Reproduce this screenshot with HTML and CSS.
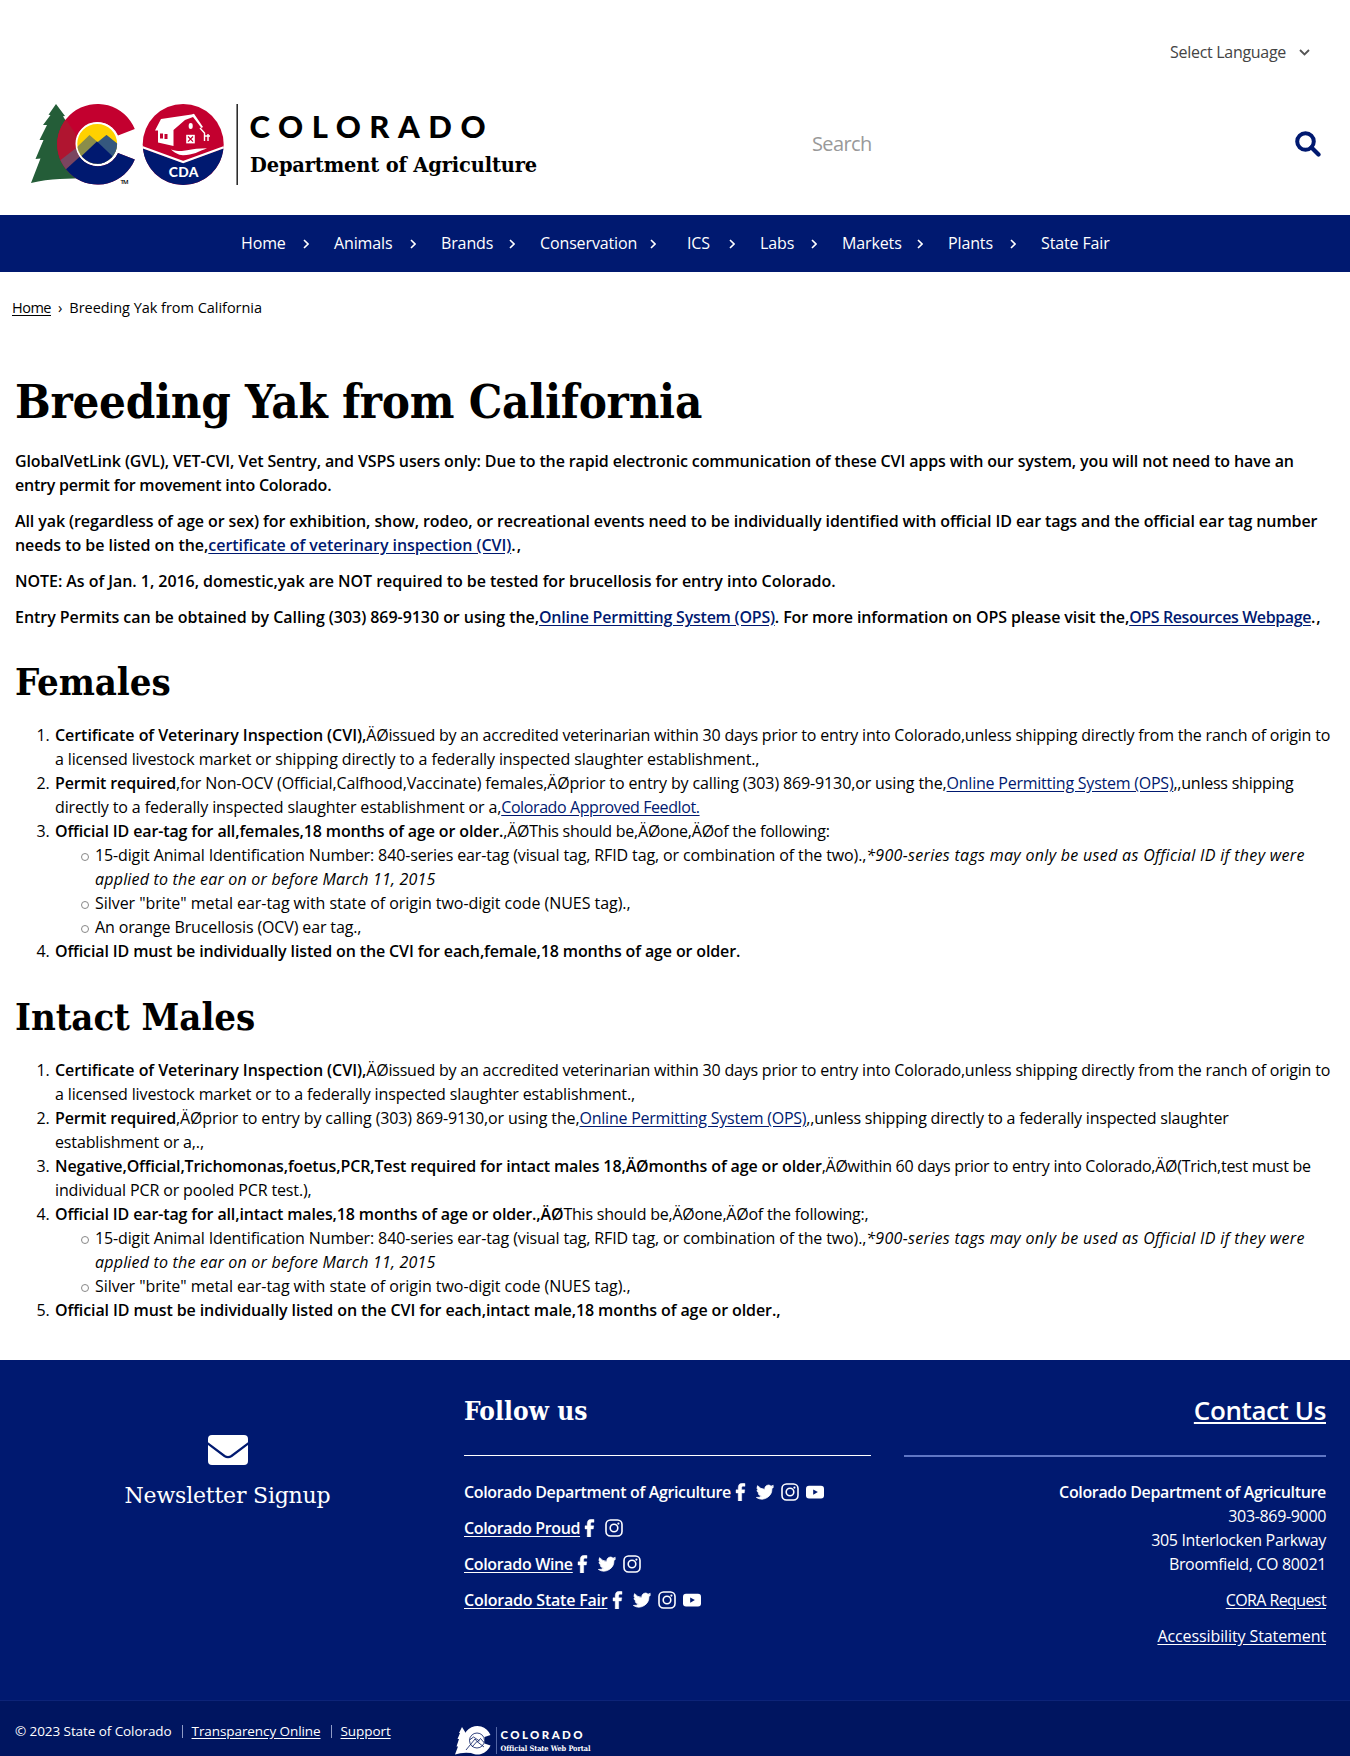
FILE: index.html
```html
<!DOCTYPE html>
<html lang="en">
<head>
<meta charset="utf-8">
<title>Breeding Yak from California | Department of Agriculture</title>
<link rel="stylesheet" href="styles.css">
</head>
<body>
<svg class="defs" width="0" height="0" aria-hidden="true">
  <symbol id="i-facebook" viewBox="0 0 12 18"><path d="M3.200 18V10H1V6.800h2.200V4.600C3.200 1.700 4.800.2 7.400.2c1 0 2 .1 2.600.2v2.900H8.300C7 3.300 6.700 4 6.700 4.900v1.900h3.100L9.300 10H6.700v8z" fill="currentColor" stroke="currentColor" stroke-width=".4"/></symbol>
  <symbol id="i-twitter" viewBox="0 0 24 24"><path d="M23.600 4.900c-.85.4-1.800.6-2.700.75 1-.6 1.700-1.500 2.100-2.600-.9.550-1.900.95-3 1.150A4.750 4.750 0 0 0 11.900 8.500 13.500 13.500 0 0 1 2.100 3.550a4.750 4.750 0 0 0 1.450 6.350c-.8 0-1.500-.25-2.150-.6v.05c0 2.300 1.650 4.200 3.800 4.650-.7.200-1.400.2-2.150.1.600 1.850 2.350 3.200 4.450 3.250A9.600 9.600 0 0 1 .5 19.300a13.450 13.450 0 0 0 20.700-11.950c1-.65 1.800-1.500 2.400-2.450z" fill="currentColor" stroke="currentColor"/></symbol>
  <symbol id="i-instagram" viewBox="0 0 18 18"><rect x="1" y="1" width="16" height="16" rx="4.500" fill="none" stroke="currentColor" stroke-width="1.600"/><circle cx="9" cy="9" r="3.800" fill="none" stroke="currentColor" stroke-width="1.600"/><circle cx="13.400" cy="4.600" r="1.100" fill="currentColor"/></symbol>
  <symbol id="i-youtube" viewBox="0 0 18 18"><rect x="0" y="2.800" width="18" height="12.600" rx="3" fill="currentColor"/><path d="M7.200 6.400v5.400l4.700-2.700z" fill="#001970"/></symbol>
  <symbol id="i-chevron" viewBox="0 0 6 10"><path d="M1 1l4 4-4 4" fill="none" stroke="currentColor" stroke-width="1.600"/></symbol>
</svg>

<header class="header">
  <div class="language"><span>Select Language</span>
    <svg width="11" height="7" viewBox="0 0 11 7"><path d="M1 1l4.500 4.500L10 1" fill="none" stroke="#555" stroke-width="1.800"/></svg>
  </div>
  <div class="brand-row">
    <svg class="logo" width="510" height="84" viewBox="29 103 510 84" role="img" aria-label="Colorado Department of Agriculture">
      <path d="M56 104l9 12-2 .3 8 13-3 .2 8 18-4 .5 14 30c-16 1-36 0-55 5l9.500-24.500-5 .5 8-19h-4l7.500-15h-4l7.500-10-2-.2z" fill="#245d38"/>
      <clipPath id="c-shape"><path d="M134.800 129L118 135.500A22 22 0 1 0 118 153L134.800 159.500A40.300 40.300 0 1 1 134.800 129z"/></clipPath>
      <g clip-path="url(#c-shape)">
        <rect x="55" y="100" width="85" height="90" fill="#c3002f"/>
        <path d="M56 124l7-9 12 18 4 22-24 10z" fill="#b01530"/>
        <path d="M58 162l22-17 12 16-24 19z" fill="#7a4560"/>
        <path d="M63 172l34-31 44 16v33H63z" fill="#001970"/>
      </g>
      <circle cx="97.200" cy="143.800" r="20.800" fill="#ffd100" stroke="#fff" stroke-width="1.800"/>
      <clipPath id="sun"><circle cx="97.200" cy="143.800" r="19.900"/></clipPath>
      <g clip-path="url(#sun)">
        <path d="M74 150l15.500-15 8 7 9-7 16 13v20H74z" fill="#8a8d4a"/>
        <path d="M97 143l9.500-8 16 13v20H97z" fill="#35587e"/>
        <path d="M74 163l23-21.500 20 19 4 8H74z" fill="#001970"/>
      </g>
      <text x="120.500" y="183.500" font-family="Open Sans" font-weight="600" font-size="6" textLength="8">TM</text>
      <circle cx="183.200" cy="144.500" r="40.500" fill="#c3002f"/>
      <path d="M142.900 148.500l40.300 14.500 40.300-14.500A40.500 40.500 0 0 1 142.900 148.500z" fill="#001970"/>
      <path d="M142.700 147.200l40.500 14.800 40.500-14.800" fill="none" stroke="#fff" stroke-width="2.200"/>
      <path d="M155 130.500l6-11.500 30.500-4.500 2.500-.8 9 13.300-1.500 1-8.500-11-8 3-11.500 10v16l-15.500-3.500v-12z" fill="#fff"/>
      <path d="M160 133.500h3v5h-3zM164.500 134h3v5h-3z" fill="#c3002f"/>
      <rect x="186.200" y="134.800" width="8.600" height="8.600" fill="#fff"/>
      <path d="M188 136.500l5 5.200m0-5.200l-5 5.200" stroke="#c3002f" stroke-width="1.200"/>
      <rect x="188.700" y="123" width="4" height="6" rx="2" fill="#fff"/>
      <path d="M200 128l4.500 5v8m0-5h5.500m-2-2v7" fill="none" stroke="#fff" stroke-width="1.400"/>
      <path d="M171 149.500c8 2.300 11 1.600 16 .7 6-1.200 12-2 20-2-8 3-14 7-24 7-5 0-9-3-12-5.700z" fill="#fff"/>
      <text x="168.800" y="177" font-family="Lato" font-weight="900" font-size="13.800" textLength="29.500" fill="#fff">CDA</text>
      <path d="M237.200 104v81" stroke="#222" stroke-width="1.500"/>
      <text x="249.500" y="138" font-family="Lato" font-weight="900" font-size="31" textLength="236" fill="#000">COLORADO</text>
      <text x="250" y="172" font-family="DejaVu Serif Condensed, DejaVu Serif" font-weight="700" font-size="20.500" textLength="287" lengthAdjust="spacingAndGlyphs" fill="#000">Department of Agriculture</text>
    </svg>
    <div class="search"><span>Search</span>
      <svg width="26" height="26" viewBox="0 0 26 26"><circle cx="10.500" cy="10.500" r="8.300" fill="none" stroke="#001970" stroke-width="4"/><path d="M16.500 16.500l7 7" stroke="#001970" stroke-width="4.200" stroke-linecap="round"/></svg>
    </div>
  </div>
</header>

<nav class="nav">
  <div><a>Home</a><svg><use href="#i-chevron"/></svg></div>
  <div><a>Animals</a><svg><use href="#i-chevron"/></svg></div>
  <div><a>Brands</a><svg><use href="#i-chevron"/></svg></div>
  <div class="tight"><a>Conservation</a><svg><use href="#i-chevron"/></svg></div>
  <div><a>ICS</a><svg><use href="#i-chevron"/></svg></div>
  <div><a>Labs</a><svg><use href="#i-chevron"/></svg></div>
  <div><a>Markets</a><svg><use href="#i-chevron"/></svg></div>
  <div><a>Plants</a><svg><use href="#i-chevron"/></svg></div>
  <div><a>State Fair</a></div>
</nav>

<div class="breadcrumb"><a>Home</a><span>›</span><span>Breeding Yak from California</span></div>

<main class="content">
  <h1>Breeding Yak from California</h1>
  <div class="intro">
    <p>GlobalVetLink (GVL), VET-CVI, Vet Sentry, and VSPS users only: Due to the rapid electronic communication of these CVI apps with our system, you will not need to have an<br><span class="k3">entry permit for movement into Colorado.</span></p>
    <p><span class="k2">All yak (regardless of age or sex) for exhibition, show, rodeo, or recreational events need to be individually identified with official ID ear tags and the official ear tag number</span><br><span class="k1">needs to be listed on the,<a>certificate of veterinary inspection (CVI)</a></span><span class="k0">.,</span></p>
    <p class="k1">NOTE: As of Jan. 1, 2016, domestic,yak are NOT required to be tested for brucellosis for entry into Colorado.</p>
    <p><span class="k1">Entry Permits can be obtained by Calling (303) 869-9130 or using the,</span><a class="k3">Online Permitting System (OPS)</a><span class="k2">. For more information on OPS please visit the,</span><a class="k4">OPS Resources Webpage</a><span class="k0">.,</span></p>
  </div>

  <h2>Females</h2>
  <ol>
    <li><b class="k1">Certificate of Veterinary Inspection (CVI),</b><span class="k5">ÄØissued by an accredited veterinarian within 30 days prior to entry into Colorado,unless shipping directly from the ranch of origin to</span><br>a licensed livestock market or shipping directly to a federally inspected slaughter establishment.,</li>
    <li><b>Permit required</b>,for Non-OCV (Official,Calfhood,Vaccinate) females,ÄØprior to entry by calling (303) 869-9130,or using the,<a class="k3">Online Permitting System (OPS)</a><span class="k3">,,unless shipping</span><br>directly to a federally inspected slaughter establishment or a,<a class="k4">Colorado Approved Feedlot.</a></li>
    <li><b>Official ID ear-tag for all,females,18 months of age or older.</b><span class="k3">,ÄØThis should be,ÄØone,ÄØof the following:</span>
      <ul>
        <li>15-digit Animal Identification Number: 840-series ear-tag (visual tag, RFID tag, or combination of the two).,<em>*900-series tags may only be used as Official ID if they were<br><span>applied to the ear on or before March 11, 2015</span></em></li>
        <li><span class="k1">Silver "brite" metal ear-tag with state of origin two-digit code (NUES tag).,</span></li>
        <li>An orange Brucellosis (OCV) ear tag.,</li>
      </ul></li>
    <li><b>Official ID must be individually listed on the CVI for each,female,18 months of age or older.</b></li>
  </ol>

  <h2>Intact Males</h2>
  <ol>
    <li><b class="k1">Certificate of Veterinary Inspection (CVI),</b><span class="k5">ÄØissued by an accredited veterinarian within 30 days prior to entry into Colorado,unless shipping directly from the ranch of origin to</span><br>a licensed livestock market or to a federally inspected slaughter establishment.,</li>
    <li><b>Permit required</b>,ÄØprior to entry by calling (303) 869-9130,or using the,<a class="k3">Online Permitting System (OPS)</a><span class="k5">,,unless shipping directly to a federally inspected slaughter</span><br>establishment or a,.,</li>
    <li><b>Negative,Official,Trichomonas,foetus,PCR,Test required for intact males 18,ÄØmonths of age or older</b><span class="k6">,ÄØwithin 60 days prior to entry into Colorado,ÄØ(Trich,test must be</span><br>individual PCR or pooled PCR test.),</li>
    <li><b>Official ID ear-tag for all,intact males,18 months of age or older.,ÄØ</b><span class="k5">This should be,ÄØone,ÄØof the following:,</span>
      <ul>
        <li>15-digit Animal Identification Number: 840-series ear-tag (visual tag, RFID tag, or combination of the two).,<em>*900-series tags may only be used as Official ID if they were<br><span>applied to the ear on or before March 11, 2015</span></em></li>
        <li><span class="k1">Silver "brite" metal ear-tag with state of origin two-digit code (NUES tag).,</span></li>
      </ul></li>
    <li><b class="k2">Official ID must be individually listed on the CVI for each,intact male,18 months of age or older.,</b></li>
  </ol>
</main>

<footer class="footer">
  <section class="newsletter">
    <svg width="40" height="30" viewBox="0 0 40 30"><rect width="40" height="30" rx="4" fill="#fff"/><path d="M-1 8l17.500 13q3.500 2.400 7 0L41 8" fill="none" stroke="#001970" stroke-width="2.200"/></svg>
    <span>Newsletter Signup</span>
  </section>
  <section class="follow">
    <h3>Follow us</h3>
    <div class="social"><b>Colorado Department of Agriculture</b><svg class="fb"><use href="#i-facebook"/></svg><svg><use href="#i-twitter"/></svg><svg><use href="#i-instagram"/></svg><svg><use href="#i-youtube"/></svg></div>
    <div class="social"><a>Colorado Proud</a><svg class="fb"><use href="#i-facebook"/></svg><svg><use href="#i-instagram"/></svg></div>
    <div class="social"><a>Colorado Wine</a><svg class="fb"><use href="#i-facebook"/></svg><svg><use href="#i-twitter"/></svg><svg><use href="#i-instagram"/></svg></div>
    <div class="social"><a class="k5">Colorado State Fair</a><svg class="fb"><use href="#i-facebook"/></svg><svg><use href="#i-twitter"/></svg><svg><use href="#i-instagram"/></svg><svg><use href="#i-youtube"/></svg></div>
  </section>
  <section class="contact">
    <h3><a>Contact Us</a></h3>
    <p><b>Colorado Department of Agriculture</b><br>303-869-9000<br>305 Interlocken Parkway<br>Broomfield, CO 80021</p>
    <p><a class="k7">CORA Request</a></p>
    <p><a class="k2">Accessibility Statement</a></p>
  </section>
</footer>

<div class="bottom">
  <div class="legal"><span>© 2023 State of Colorado</span><i></i><a>Transparency Online</a><i></i><a>Support</a></div>
  <svg width="138" height="30" viewBox="0 0 138 30" role="img" aria-label="Colorado Official State Web Portal">
    <path d="M7 1l5 8 4 18q-9-1-16 1.500l3-8H1.500L4 13H2.500L5 7H4z" fill="#fff"/>
    <path d="M35.500 9A14.200 14.200 0 1 0 35.500 19.500L29.500 17.500V11z" fill="#fff"/>
    <circle cx="22" cy="14.500" r="7.500" fill="#fff" stroke="#001560" stroke-width=".8"/>
    <path d="M11 24L20 13l2.500 3 3-3.500 3.500 4M17 21l5-5.500 7 5.500M14.500 14l4-3 6 4" fill="none" stroke="#001560" stroke-width=".8"/>
    <path d="M41.500 1v27" stroke="#5265a5"/>
    <text x="45.500" y="12.500" font-family="Lato" font-weight="900" font-size="11.500" textLength="82" fill="#fff">COLORADO</text>
    <text x="45.500" y="24.500" font-family="DejaVu Serif Condensed, DejaVu Serif" font-weight="700" font-size="7.500" textLength="90" lengthAdjust="spacingAndGlyphs" fill="#fff">Official State Web Portal</text>
  </svg>
</div>
</body>
</html>
```
FILE: styles.css
```css
* { box-sizing: border-box; }
body { margin: 0; height: 1756px; overflow: hidden; background: #fff; color: #000; font: 400 16px/24px "Open Sans", sans-serif; letter-spacing: -.13px; }
a { text-decoration: underline; text-underline-offset: 2px; }
b { font-weight: 600; }
.defs { position: absolute; }
/* tracking steps for copy */
.k0 { letter-spacing: 1px; }
.k1 { letter-spacing: -.05px; }
.k2 { letter-spacing: -.1px; }
.k3 { letter-spacing: -.23px; }
.k4 { letter-spacing: -.4px; }
.k5 { letter-spacing: -.21px; }
.k6 { letter-spacing: -.28px; }
.k7 { letter-spacing: -.6px; }

.header { height: 215px; padding-top: 40px; }
.language { display: flex; align-items: center; justify-content: flex-end; gap: 13px; padding-right: 40px; color: #444; letter-spacing: -.3px; }
.brand-row { display: flex; align-items: center; justify-content: space-between; margin-top: 39px; padding: 0 29px; }
.search { display: flex; align-items: center; justify-content: space-between; width: 509px; margin-bottom: 2px; color: #999; font-size: 20px; letter-spacing: -.6px; }

.nav { display: grid; grid-template-columns: 93px 107px 99px 147px 73px 82px 106px 93px auto; align-items: center; height: 57px; padding: 0 0 2px 241px; background: #001970; color: #fff; }
.nav div { display: flex; align-items: center; justify-content: space-between; padding-right: 25px; }
.nav .tight { padding-right: 31px; }
.nav a { text-decoration: none; }
.nav svg { width: 6px; height: 10px; margin-top: 3px; }

.breadcrumb { display: flex; gap: 7px; padding: 24px 12px 0; font-size: 14.500px; letter-spacing: -.03px; }
.breadcrumb a { letter-spacing: -.5px; }

.content { padding: 54px 15px 0; white-space: nowrap; }
.content a { color: #001970; }
h1, h2 { font-family: "DejaVu Serif Condensed", "DejaVu Serif", serif; font-weight: 700; }
h1 { margin: 0 0 19px; font-size: 47px; line-height: 56px; letter-spacing: -.27px; }
h2 { margin: 32px 0 19px; font-size: 38px; line-height: 44px; letter-spacing: -.1px; }
.intro { font-weight: 600; }
.content p { margin: 0 0 12px; }
.intro p:last-child { margin: 0 0 -1px; }
ol { margin: 0; padding-left: 40px; }
ol > li::marker { content: counter(list-item) ".\00a0\200a"; }
.content ul { margin: 0; padding-left: 40px; list-style: none; }
.content ul li::marker { content: ""; }
.content ul li::before { content: ""; float: left; width: 6px; height: 6px; margin: 10px 0 0 -14px; border: 1px solid #888; border-radius: 50%; }
em { letter-spacing: .31px; }
em span { letter-spacing: .2px; }

.footer { display: grid; grid-template-columns: 455px 449px 422px; height: 340px; margin-top: 38px; background: #001970; color: #fff; letter-spacing: -.34px; }
.newsletter { display: flex; flex-direction: column; align-items: center; padding-top: 75px; }
.newsletter span { margin-top: 17px; font: 400 22px/28px "DejaVu Serif", serif; letter-spacing: -.2px; }
.follow { padding: 33px 33px 0 9px; }
.footer h3 { height: 63px; margin: 0 0 24px; border-bottom: 1px solid #fff; font: 600 26px/36px "Open Sans", sans-serif; }
.follow h3 { font: 700 26px/36px "DejaVu Serif Condensed", "DejaVu Serif", serif; letter-spacing: .1px; }
.social { display: flex; align-items: center; height: 24px; margin-bottom: 12px; font-weight: 600; white-space: nowrap; }
.social svg { width: 18px; height: 18px; margin-left: 7px; }
.social .fb { width: 12px; margin: 0 2px 0 4px; }
.contact { padding-top: 33px; text-align: right; }
.footer .contact h3 { border-bottom: 2px solid #5f76c4; height: 64px; margin-bottom: 23px; line-height: 35px; letter-spacing: -.4px; }
.footer p { margin: 0 0 12px; }

.bottom { display: flex; align-items: flex-start; height: 56px; padding: 18px 15px 0; border-top: 1px solid #0d2478; background: #001560; color: #fff; font-size: 13.500px; letter-spacing: -.08px; }
.legal { display: flex; align-items: center; width: 440px; }
.legal i { width: 1px; height: 13px; margin: 0 9px 0 10px; background: #8f9bc6; }
.bottom svg { margin-top: 7px; }
```
